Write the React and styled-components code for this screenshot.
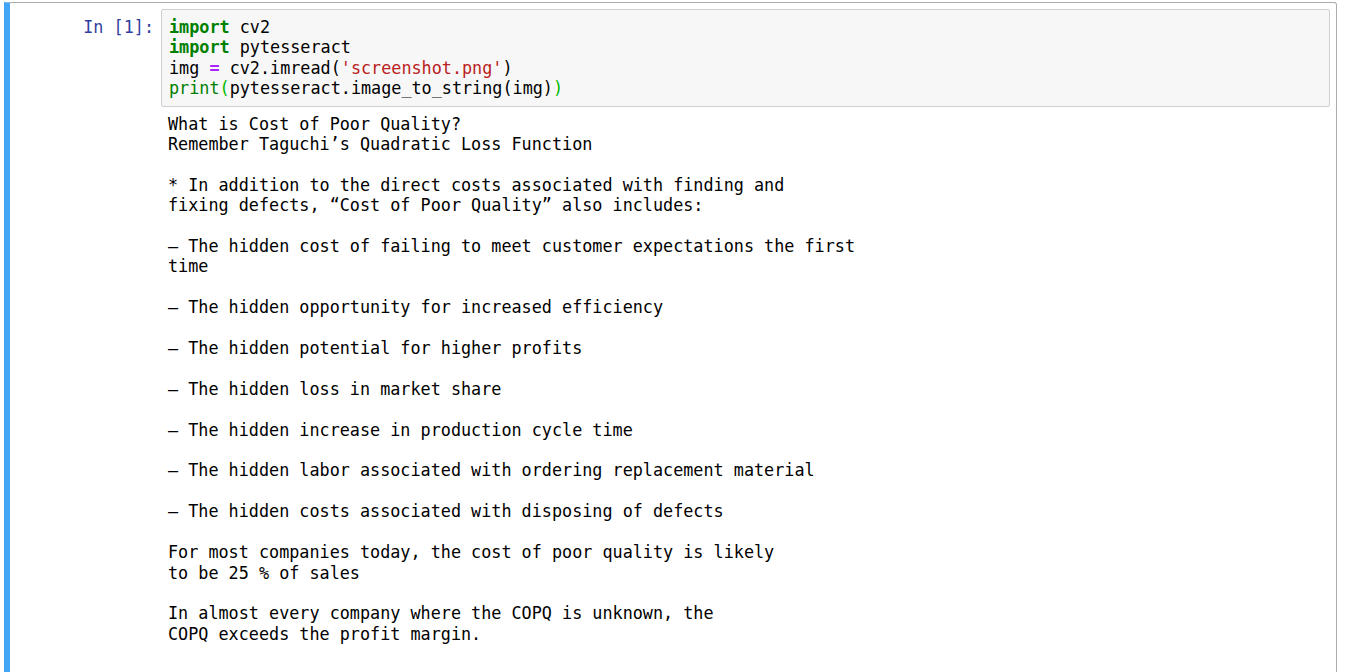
import styled, { createGlobalStyle } from 'styled-components';

const GlobalStyle = createGlobalStyle`
  html, body {
    margin: 0;
    padding: 0;
    background: #ffffff;
    overflow: hidden;
  }
`;

const outputText = `What is Cost of Poor Quality?
Remember Taguchi’s Quadratic Loss Function

* In addition to the direct costs associated with finding and
fixing defects, “Cost of Poor Quality” also includes:

— The hidden cost of failing to meet customer expectations the first
time

— The hidden opportunity for increased efficiency

— The hidden potential for higher profits

— The hidden loss in market share

— The hidden increase in production cycle time

— The hidden labor associated with ordering replacement material

— The hidden costs associated with disposing of defects

For most companies today, the cost of poor quality is likely
to be 25 % of sales

In almost every company where the COPQ is unknown, the
COPQ exceeds the profit margin.
`;

export default function App() {
    return (
        <>
            <GlobalStyle />
            <Notebook>
                <Cell>
                    <InputRow>
                        <Prompt>In&nbsp;[1]:</Prompt>
                        <CodeBox>
                            <Line><Kw>import</Kw> cv2</Line>
                            <Line><Kw>import</Kw> pytesseract</Line>
                            <Line>img <Op>=</Op> cv2.imread(<Str>'screenshot.png'</Str>)</Line>
                            <Line><Builtin>print</Builtin><Match>(</Match>pytesseract.image_to_string(img)<Match>)</Match></Line>
                        </CodeBox>
                    </InputRow>
                    <OutputRow>
                        <OutputText>{outputText}</OutputText>
                    </OutputRow>
                </Cell>
            </Notebook>
        </>
    );
}

const Notebook = styled.div`
    padding: 2px 0 0 4px;
    font-family: "DejaVu Sans Mono", "Liberation Mono", monospace;
    font-size: 16.8px;
    line-height: 20.4px;
`

const Cell = styled.div`
    width: 1333px;
    box-sizing: border-box;
    border: 1px solid #ababab;
    border-left: 6px solid #42A5F5;
    border-radius: 0 3px 0 0;
    padding: 6px 6px 60px 0;
`

const InputRow = styled.div`
    display: flex;
    align-items: flex-start;
`

const Prompt = styled.div`
    width: 151px;
    flex-shrink: 0;
    box-sizing: border-box;
    padding: 8px 7px 0 0;
    text-align: right;
    color: #303F9F;
`

const CodeBox = styled.div`
    flex: 1;
    background: #f7f7f7;
    border: 1px solid #cfcfcf;
    border-radius: 2px;
    padding: 7px 7px;
    color: #000;
`

const Line = styled.div`
    white-space: pre;
    height: 20.4px;
`

const Kw = styled.span`
    color: #008000;
    font-weight: bold;
`

const Op = styled.span`
    color: #AA22FF;
    font-weight: bold;
`

const Str = styled.span`
    color: #BA2121;
`

const Builtin = styled.span`
    color: #008000;
`

const Match = styled.span`
    color: #00bb00;
`

const OutputRow = styled.div`
    padding: 7px 0 0 158px;
`

const OutputText = styled.pre`
    margin: 0;
    font: inherit;
    color: #000;
    white-space: pre;
`
